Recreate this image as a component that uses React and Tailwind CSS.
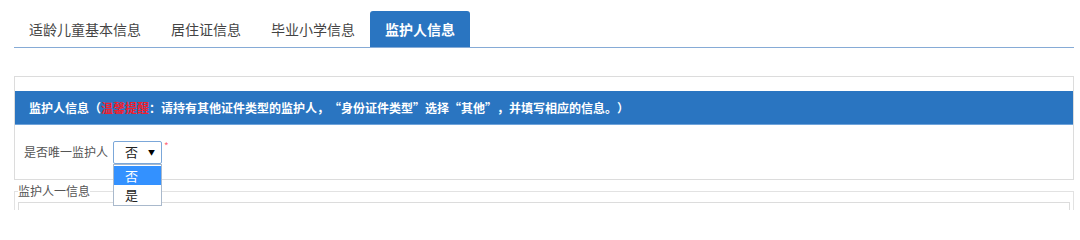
import React from "react";

const tabs = ["适龄儿童基本信息", "居住证信息", "毕业小学信息", "监护人信息"];

export default function App() {
  return (
    <div className="w-[1080px] h-[210px] overflow-hidden bg-white font-['Noto_Sans_CJK_SC',sans-serif] text-[#333]">
      <div className="pl-[14px] pr-[6px]">
        {/* Tabs */}
        <div className="flex pt-[11px] border-b border-[#86abd6]">
          {tabs.map((t, i) =>
            i === 3 ? (
              <div
                key={t}
                className="h-[36px] px-[15px] flex items-center text-[14px] font-bold text-white bg-[#2a75c1] rounded-t-[3px]"
              >
                {t}
              </div>
            ) : (
              <div
                key={t}
                className="h-[36px] px-[15px] flex items-center text-[14px] text-[#444]"
              >
                {t}
              </div>
            )
          )}
        </div>

        {/* Panel */}
        <div className="relative mt-[28px] border border-[#dcdcdc] pt-[14px]">
          <div className="h-[34px] bg-[#2a75c1] border-b border-[#6fa3da] flex items-center pl-[14px] text-[12px] font-bold text-white whitespace-nowrap [text-spacing-trim:space-all]">
            <span>监护人信息（</span>
            <span className="text-[#f0202e]">温馨提醒</span>
            <span>：请持有其他证件类型的监护人，“身份证件类型”选择“其他”，并填写相应的信息。）</span>
          </div>
          <div className="flex items-center h-[54px] pl-[9px]">
            <span className="text-[12px] text-[#555]">是否唯一监护人</span>
            <div className="relative ml-[5px]">
              <div className="w-[49px] h-[23px] border border-[#7ba7d9] rounded-[2px] flex items-center justify-between pl-[11px] pr-[6px] text-[13px] text-[#222]">
                <span>否</span>
                <span className="text-[7px] leading-none text-black">▼</span>
              </div>
              <div className="absolute left-0 top-[23px] w-[49px] h-[42px] bg-white border border-[#a9b9cc] z-10 flex flex-col pt-[1px]">
                <div className="h-[20px] bg-[#3391ff] text-white text-[13px] flex items-center pl-[11px]">否</div>
                <div className="h-[20px] text-[#222] text-[13px] flex items-center pl-[11px]">是</div>
              </div>
            </div>
            <span className="text-[#ff6b78] text-[10px] self-start mt-[13px] ml-[2px]">*</span>
          </div>
        </div>

        {/* Fieldset */}
        <fieldset className="mt-[3px] border border-[#e2e2e2] px-[3px]">
          <legend className="text-[12px] leading-[16px] text-[#555] ml-0 px-0">监护人一信息</legend>
          <div className="mt-[3px] h-[40px] border border-[#dcdcdc]"></div>
        </fieldset>
      </div>
    </div>
  );
}
